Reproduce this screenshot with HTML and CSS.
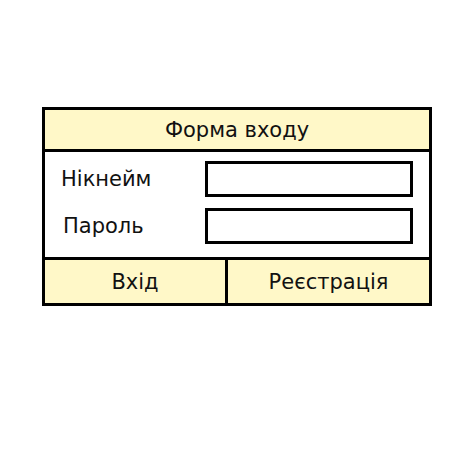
FILE: index.html
```html
<!DOCTYPE html>
<html lang="uk">
<head>
    <meta charset="UTF-8">
    <title>Форма входу</title>
    <link rel="stylesheet" href="styles.css">
</head>
<body>

<div class="login-box">
    <div class="login-header">Форма входу</div>

    <div class="login-fields">
        <div class="field-row">
            <label class="field-label nick">Нікнейм</label>
            <div class="field-input"></div>
        </div>
        <div class="field-row">
            <label class="field-label pass">Пароль</label>
            <div class="field-input"></div>
        </div>
    </div>

    <div class="login-footer">
        <div class="login-btn enter">Вхід</div>
        <div class="login-btn register">Реєстрація</div>
    </div>
</div>

</body>
</html>
```

FILE: styles.css
```css
body {
    font-family: 'DejaVu Sans', Verdana, sans-serif;
    margin: 0;
    background-color: #ffffff;
    color: #111;
}
.login-box {
    margin: 107px 0 0 42px;
    width: 384px;
    border: 3px solid #000;
}
.login-header {
    height: 39px;
    background-color: #fff8c8;
    border-bottom: 3px solid #000;
    display: flex;
    align-items: center;
    justify-content: center;
    font-size: 21px;
}
.login-fields {
    padding: 9px 0 13px 0;
    display: flex;
    flex-direction: column;
    gap: 11px;
}
.field-row {
    display: flex;
    align-items: center;
}
.field-label {
    box-sizing: border-box;
    width: 160px;
    font-size: 21px;
}
.field-label.nick {
    padding-left: 16px;
}
.field-label.pass {
    padding-left: 18px;
}
.field-input {
    width: 202px;
    height: 30px;
    border: 3px solid #000;
    background: #fff;
}
.login-footer {
    display: flex;
    border-top: 3px solid #000;
    background-color: #fff8c8;
    height: 43px;
}
.login-btn {
    display: flex;
    align-items: center;
    justify-content: center;
    font-size: 21px;
}
.login-btn.enter {
    width: 180px;
    border-right: 3px solid #000;
}
.login-btn.register {
    flex: 1;
}
```
